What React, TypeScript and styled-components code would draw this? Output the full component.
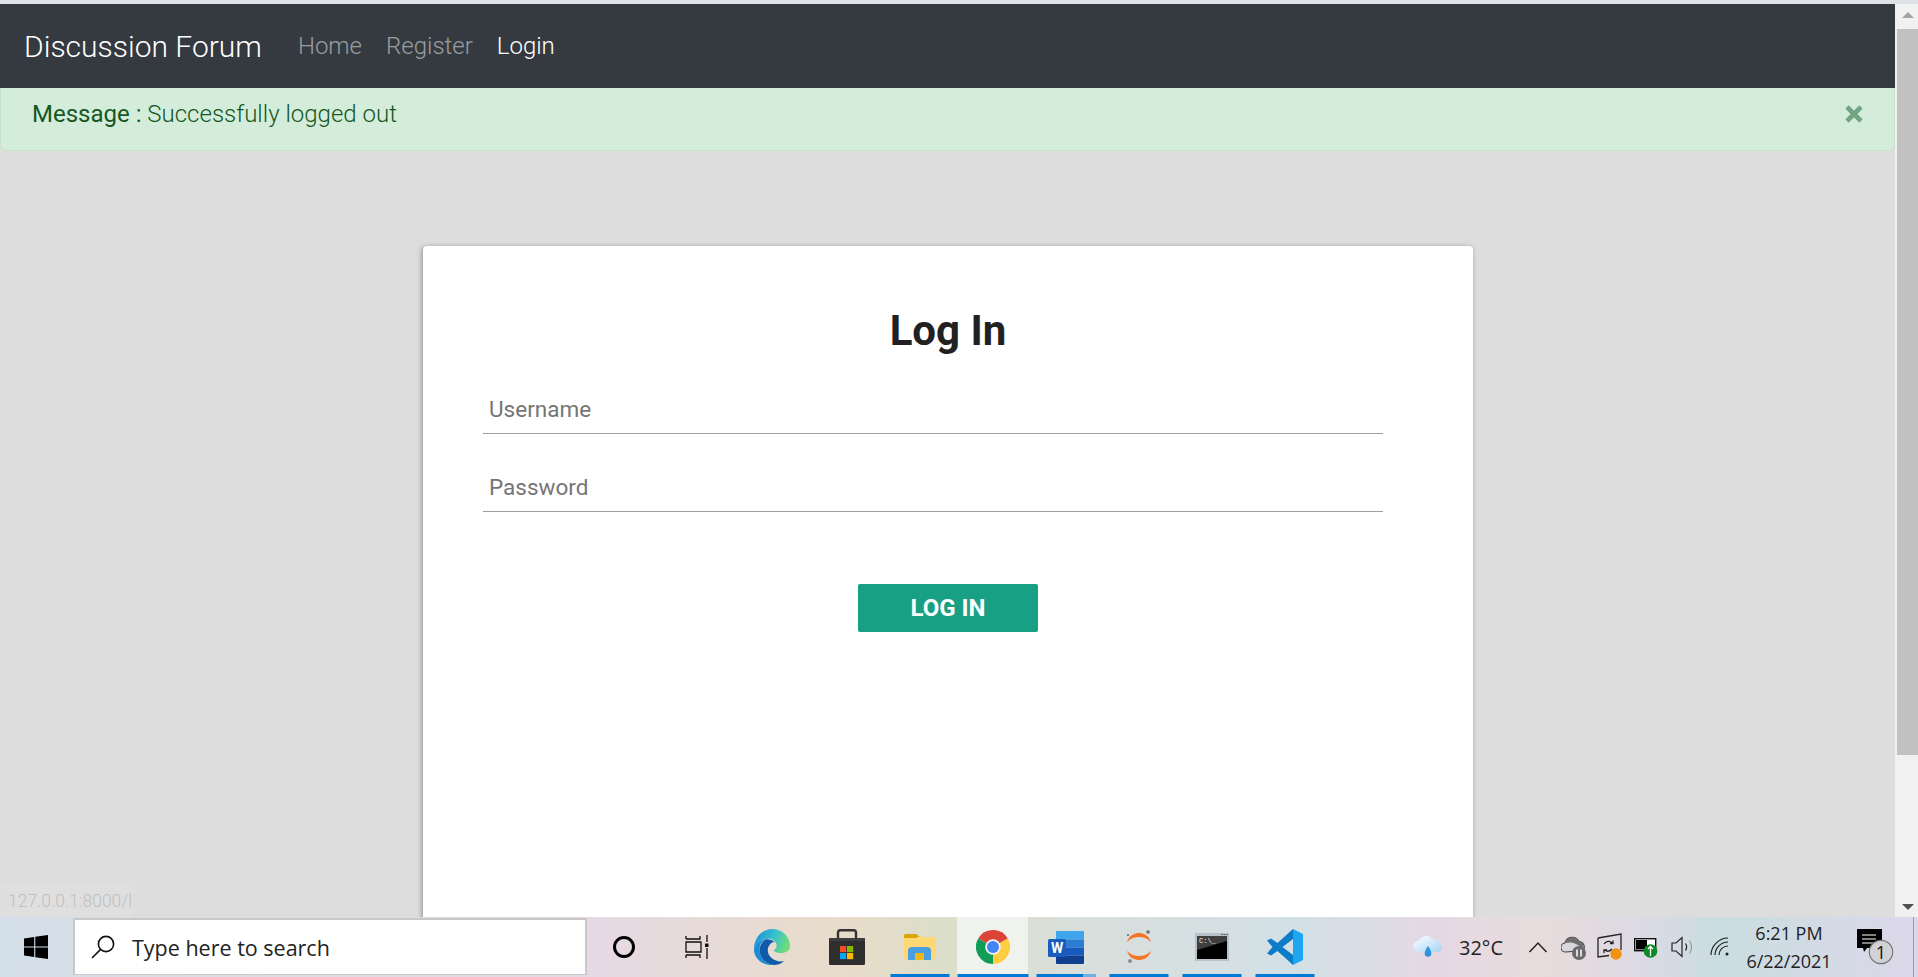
import React from "react";
import styled, { createGlobalStyle } from "styled-components";

const GlobalStyle = createGlobalStyle`
  * {
    box-sizing: border-box;
  }
  body {
    margin: 0;
    font-family: Roboto, "Liberation Sans", sans-serif;
    background: #dcdcdc;
  }
`;

const Screen = styled.div`
  display: flex;
  flex-direction: column;
  width: 1918px;
  height: 977px;
  overflow: hidden;
  position: relative;
`;

const TopStrip = styled.div`
  height: 4px;
  flex: none;
  background: #dee1e6;
`;

const Browser = styled.div`
  display: flex;
  flex: 1;
  min-height: 0;
`;

const Viewport = styled.div`
  flex: 1;
  min-width: 0;
  overflow: hidden;
  background: #dddddd;
`;

const Navbar = styled.nav`
  display: flex;
  align-items: center;
  height: 84px;
  padding: 0 24px;
  background: #343a40;
`;

const Brand = styled.a`
  font-size: 30px;
  font-weight: 300;
  color: #fff;
  margin-right: 36px;
`;

const NavLinks = styled.div`
  display: flex;
  gap: 24px;
`;

const NavLink = styled.a<{ $active?: boolean }>`
  font-size: 24px;
  font-weight: 300;
  color: ${(p) => (p.$active ? "#fff" : "rgba(255, 255, 255, 0.5)")};
`;

const Alert = styled.div`
  display: flex;
  align-items: center;
  justify-content: space-between;
  height: 63px;
  padding: 0 29px 11px 31px;
  background: #d4edda;
  border: 1px solid #c3e6cb;
  border-top: none;
  border-radius: 0 0 6px 6px;
  color: #155724;
  font-size: 24px;
  font-weight: 300;
`;

const AlertLabel = styled.span`
  font-weight: 400;
`;

const CloseIcon = styled.svg`
  width: 22px;
  height: 22px;
  display: block;
`;

const Card = styled.div`
  width: 1050px;
  height: 800px;
  margin: 95px 0 0 423px;
  padding: 60px 90px 0 60px;
  background: #fff;
  border-radius: 4px;
  box-shadow: -1px 1px 5px rgba(0, 0, 0, 0.35);
`;

const Title = styled.h1`
  margin: 0;
  padding-left: 30px;
  font-size: 42px;
  line-height: 50px;
  font-weight: 700;
  text-align: center;
  color: #212121;
`;

const Form = styled.form`
  display: flex;
  flex-direction: column;
`;

const Input = styled.input`
  display: block;
  width: 100%;
  height: 50px;
  margin-top: 28px;
  padding: 0 6px;
  border: none;
  border-bottom: 1px solid #9e9e9e;
  outline: none;
  font-family: inherit;
  font-size: 22.5px;
  font-weight: 400;
  &::placeholder {
    color: #757575;
    opacity: 1;
  }
`;

const Submit = styled.button`
  align-self: center;
  width: 180px;
  height: 48px;
  margin: 72px 0 0 30px;
  padding: 0 0 1px;
  border: none;
  border-radius: 2px;
  background: #17a084;
  color: #fff;
  font-family: inherit;
  font-size: 24px;
  font-weight: 700;
  text-transform: uppercase;
`;

const Scrollbar = styled.div`
  display: flex;
  flex-direction: column;
  align-items: flex-end;
  justify-content: space-between;
  flex: none;
  width: 23px;
  background: #f1f1f1;
  padding-top: 8px;
  padding-bottom: 7px;
`;

const ArrowBtn = styled.div<{ $down?: boolean }>`
  align-self: center;
  width: 0;
  height: 0;
  margin-left: 2px;
  border-left: 6px solid transparent;
  border-right: 6px solid transparent;
  ${(p) =>
    p.$down
      ? "border-top: 6px solid #505050;"
      : "border-bottom: 6px solid #a3a3a3;"}
`;

const Thumb = styled.div`
  width: 21px;
  height: 726px;
  margin-top: 11px;
  background: #c1c1c1;
`;

const ScrollSpacer = styled.div`
  flex: 1;
`;

const StatusTip = styled.div`
  position: absolute;
  left: 0;
  bottom: 60px;
  width: 132px;
  height: 33px;
  padding: 7px 0 0 8px;
  background: #dfdfdf;
  color: #c0c0c0;
  font-size: 17.5px;
  font-weight: 300;
  border-radius: 0 2px 0 0;
  white-space: nowrap;
`;

const Taskbar = styled.div`
  display: flex;
  align-items: stretch;
  flex: none;
  height: 60px;
  background: linear-gradient(
    90deg,
    #d3dfe9 0,
    #dcdde6 200px,
    #e6d9e3 600px,
    #e8dcc9 850px,
    #d9dfca 960px,
    #d9dfdc 1080px,
    #d2e0e6 1300px,
    #e6d8e3 1440px,
    #e8dcdc 1540px,
    #dcdae4 1640px,
    #c9dde0 1720px,
    #dcd8ea 1918px
  );
`;

const StartButton = styled.div`
  display: flex;
  align-items: center;
  justify-content: center;
  width: 73px;
  padding-right: 1px;
`;

const SearchBox = styled.div`
  display: flex;
  align-items: center;
  width: 514px;
  gap: 16px;
  padding-left: 15px;
  margin-top: 1px;
  margin-bottom: 2px;
  background: #fff;
  border: 2px solid #c8c8c8;
  border-bottom-width: 1px;
  font-family: "Open Sans", sans-serif;
  font-size: 21.5px;
  color: #222;
`;

const TaskButton = styled.div<{ $active?: boolean; $open?: boolean; $w?: number }>`
  position: relative;
  display: flex;
  align-items: center;
  justify-content: center;
  width: ${(p) => p.$w ?? 73}px;
  ${(p) => p.$active && "background: linear-gradient(#f0f2ee, #f0f2ee) no-repeat center / 71px 100%;"}
  ${(p) =>
    p.$open &&
    `&::after {
      content: "";
      position: absolute;
      bottom: 0;
      left: 50%;
      transform: translateX(-50%);
      width: ${p.$active ? 71 : 59}px;
      height: 3px;
      background: #0078d4;
    }`}
`;

const WordLight = styled.span`
  position: absolute;
  bottom: 0;
  left: 54px;
  width: 12px;
  height: 3px;
  background: #6fb0e6;
  z-index: 1;
`;

const Tray = styled.div`
  display: flex;
  align-items: center;
  margin-left: auto;
  padding-right: 4px;
`;

const TrayItem = styled.div<{ $w: number }>`
  display: flex;
  align-items: center;
  justify-content: center;
  width: ${(p) => p.$w}px;
  height: 100%;
`;

const TempText = styled.span`
  font-family: "Open Sans", sans-serif;
  font-size: 20px;
  color: #222;
`;

const Clock = styled.div`
  display: flex;
  flex-direction: column;
  align-items: center;
  gap: 7px;
  font-family: "Open Sans", sans-serif;
  font-size: 18px;
  line-height: 21px;
  color: #222;
`;

const DesktopEdge = styled.div`
  width: 1px;
  height: 100%;
  background: #9a9aa4;
`;

const WindowsIcon = () => (
  <svg width="24" height="24" viewBox="0 0 24 24">
    <path d="M0 3.400 10.200 2v9.400H0zM11.300 1.800 24 0v11.400H11.300zM0 12.600h10.200V22L0 20.600zM11.300 12.600H24V24l-12.700-1.800z" fill="#000" />
  </svg>
);

const SearchIcon = () => (
  <svg width="26" height="26" viewBox="0 0 26 26" fill="none" stroke="#111" strokeWidth="1.600">
    <circle cx="16" cy="10" r="7.600" />
    <path d="M10.600 15.400 2 24" />
  </svg>
);

const CortanaIcon = () => (
  <svg width="24" height="24" viewBox="0 0 24 24" fill="none" stroke="#000" strokeWidth="3">
    <circle cx="12" cy="12" r="9.500" />
  </svg>
);

const TaskViewIcon = () => (
  <svg width="26" height="24" viewBox="0 0 26 24" fill="none" stroke="#111" strokeWidth="1.300">
    <path d="M1 4h14V1M1 4V1M1 7h15v10H1zM1 20h14v3M1 20v3M22 0v7M22 13v11" />
    <rect x="20" y="8.500" width="3.500" height="3.500" fill="#111" stroke="none" />
  </svg>
);

const EdgeIcon = () => (
  <svg width="36" height="36" viewBox="0 0 36 36">
    <defs>
      <linearGradient id="edgeA" x1="0" y1="0.300" x2="1" y2="0.600">
        <stop offset="0" stopColor="#1f8fd6" />
        <stop offset="0.500" stopColor="#35c0cf" />
        <stop offset="1" stopColor="#74de74" />
      </linearGradient>
    </defs>
    <path d="M0 20C1 15 5 11.500 11 10.500 7 13 5 17 5.500 22 6 29 12 35.500 20 36 9 37 0 30 0 20z" fill="#1c8bd6" />
    <path d="M11 10.500c-3 2.500-6 6.500-5.500 11.500.5 7 6.500 13.500 14.500 14 3 0 7-1 10-4-4 1-9 0-12.500-3-4-3.500-5-9-2-13 1-2 3-3 5-3-2-2-6-3.500-9.500-2.500z" fill="#0e5ca8" />
    <path d="M18 0C29 0 36 8 36 17c0 5-4 7-9 7-4 0-7-1-7-3 2-1 3-3 2.500-5.500C21 10 15 8.500 10 10.500 5 12.500 1 16 0 20 0 9 8 0 18 0z" fill="url(#edgeA)" />
  </svg>
);

const StoreIcon = () => (
  <svg width="36" height="36" viewBox="0 0 36 36">
    <path d="M9 10V3.500A2.500 2.500 0 0 1 11.500 1.200h13A2.500 2.500 0 0 1 27 3.500V10" fill="none" stroke="#333" strokeWidth="2.400" />
    <path d="M0 9h36v25.500a1.500 1.500 0 0 1-1.500 1.500h-33A1.500 1.500 0 0 1 0 34.500z" fill="#2e2e2e" />
    <path d="M0 9h36v3H0z" fill="#3d3d3d" />
    <rect x="11" y="17" width="6.200" height="6.200" fill="#f25022" />
    <rect x="18" y="17" width="6.200" height="6.200" fill="#7fba00" />
    <rect x="11" y="24" width="6.200" height="6.200" fill="#00a4ef" />
    <rect x="18" y="24" width="6.200" height="6.200" fill="#ffb900" />
  </svg>
);

const ExplorerIcon = () => (
  <svg width="32" height="26" viewBox="0 0 32 26">
    <path d="M0 1.500A1.500 1.500 0 0 1 1.500 0h11l3 3-3 2H0z" fill="#dba400" />
    <path d="M0 4h12l2-1h16.500A1.500 1.500 0 0 1 32 4.500v19a1.500 1.500 0 0 1-1.500 1.500h-29A1.500 1.500 0 0 1 0 23.500z" fill="#fed872" />
    <path d="M4 25v-8a4 4 0 0 1 4-4h15a4 4 0 0 1 4 4v9h-7v-7h-9v7H4z" fill="#4a9fe0" />
    <rect x="11" y="19" width="9" height="7" fill="#f3b71a" />
  </svg>
);

const ChromeIcon = () => (
  <svg width="34" height="34" viewBox="0 0 48 48">
    <path d="M24 24 44.800 12A24 24 0 0 0 3.200 12z" fill="#db4437" />
    <path d="M24 24 3.200 12A24 24 0 0 0 24 48z" fill="#0f9d58" />
    <path d="M24 24 24 48A24 24 0 0 0 44.800 12z" fill="#ffcd40" />
    <circle cx="24" cy="24" r="11" fill="#f1f1f1" />
    <circle cx="24" cy="24" r="8.500" fill="#4285f4" />
  </svg>
);

const WordIcon = () => (
  <svg width="36" height="33" viewBox="0 0 36 33">
    <path d="M8 1a1 1 0 0 1 1-1h26a1 1 0 0 1 1 1v7.500H8z" fill="#41a5ee" />
    <rect x="8" y="8.500" width="28" height="8" fill="#2b7cd3" />
    <rect x="8" y="16.500" width="28" height="8" fill="#185abd" />
    <path d="M8 24.500h28V32a1 1 0 0 1-1 1H9a1 1 0 0 1-1-1z" fill="#103f91" />
    <rect x="0" y="8" width="18" height="18" rx="1.500" fill="#1a5cbd" />
    <text x="9" y="22" textAnchor="middle" fontFamily="Roboto, sans-serif" fontWeight="700" fontSize="14" fill="#fff">W</text>
  </svg>
);

const JupyterIcon = () => (
  <svg width="26" height="34" viewBox="0 0 26 34">
    <path d="M1 12C3 5 9 3 13 3s10 2 12 9C21 8 17 7 13 7S5 8 1 12z" fill="#f37726" />
    <path d="M1 21c2 7 8 9 12 9s10-2 12-9c-4 4-8 5-12 5S5 25 1 21z" fill="#f37726" />
    <circle cx="22" cy="2" r="1.800" fill="#6f6f70" />
    <circle cx="2" cy="5" r="1" fill="#616262" />
    <circle cx="4" cy="31" r="2" fill="#8d8d8d" />
  </svg>
);

const TerminalIcon = () => (
  <svg width="34" height="28" viewBox="0 0 34 28">
    <rect width="34" height="28" fill="#b9c0c9" />
    <path d="M26 1.500h1.500M28.500 1.500H30M31 1.500h1.500" stroke="#555" strokeWidth="1" />
    <rect x="2" y="3" width="30" height="23" fill="#000" />
    <path d="M2 3h30v5C22 11 12 14 2 17z" fill="#3f3f3f" />
    <text x="4" y="10" fontFamily="Liberation Mono, monospace" fontSize="7" fill="#eee">C:\_</text>
  </svg>
);

const VsCodeIcon = () => (
  <svg width="36" height="36" viewBox="0 0 36 36">
    <path d="M26 0 10.500 14 4 9.500 0 11.500 5.500 18 0 24.500 4 26.500 10.500 22 26 36V26L15.500 18 26 10z" fill="#0a7cc8" />
    <path d="M26 0 36 5v26l-10 5z" fill="#1fa6f0" />
  </svg>
);

const WeatherIcon = () => (
  <svg width="30" height="22" viewBox="0 0 30 22">
    <defs>
      <linearGradient id="cloudFill" x1="0" y1="0" x2="1" y2="1">
        <stop offset="0" stopColor="#ffffff" />
        <stop offset="1" stopColor="#a6d4f5" />
      </linearGradient>
    </defs>
    <path d="M6 16a5.500 5.500 0 0 1-.5-11C7 2 10 0 13.500 0 17 0 20 2 22 5a5.500 5.500 0 0 1 3 11z" fill="url(#cloudFill)" />
    <path d="M15 10c2 3 3.300 5 3.300 7.500a3.300 3.300 0 0 1-6.600 0c0-2.500 1.300-4.500 3.300-7.500z" fill="#2f94dc" />
  </svg>
);

const ChevronIcon = () => (
  <svg width="20" height="12" viewBox="0 0 20 12" fill="none" stroke="#222" strokeWidth="1.500">
    <path d="M1.500 11 10 2l8.500 9" />
  </svg>
);

const OneDriveIcon = () => (
  <svg width="26" height="28" viewBox="0 0 26 28">
    <path d="M5 19a4.500 4.500 0 0 1-1-9 7.500 7.500 0 0 1 14-1.500 5.500 5.500 0 0 1 4 9z" fill="#d8d8dc" stroke="#444" strokeWidth="1.100" />
    <path d="M4 10a7.500 7.500 0 0 1 14-1.500 5.500 5.500 0 0 1 4 8C15 9 9 9 4 10z" fill="#6e6e70" />
    <circle cx="18" cy="20" r="7" fill="#6a6a6a" />
    <path d="M16 16.500v7M20 16.500v7" stroke="#fff" strokeWidth="1.500" />
  </svg>
);

const SyncIcon = () => (
  <svg width="26" height="28" viewBox="0 0 26 28" fill="none" stroke="#222" strokeWidth="1.300">
    <path d="M1 5 24 1v16M1 5v19l11-1.500" />
    <path d="M7 11c2-3 6-3.500 8-1M16 7.500v3h-3M15 16c-2 2.500-5 3-7 1M7 20v-3h3" />
    <circle cx="19" cy="21" r="5.700" fill="#f39110" stroke="none" />
  </svg>
);

const BatteryIcon = () => (
  <svg width="24" height="26" viewBox="0 0 24 26">
    <rect x="0.700" y="4.700" width="21" height="12" fill="#fff" stroke="#111" strokeWidth="1.400" />
    <rect x="2" y="6" width="11" height="9.500" fill="#000" />
    <circle cx="16.500" cy="17" r="6.800" fill="#0a8a24" />
    <path d="M16.500 12v10M14 15l2.500-2.500L19 15" stroke="#fff" strokeWidth="1.300" fill="none" />
  </svg>
);

const SpeakerIcon = () => (
  <svg width="23" height="22" viewBox="0 0 23 22" fill="none" stroke="#222" strokeWidth="1.200">
    <path d="M1 7h4l6-5.500v19L5 15H1z" />
    <path d="M14.500 7.500c1.300 2 1.300 5 0 7" />
    <path d="M18.500 4.500c2.500 4 2.500 9 0 13" stroke="#999" />
  </svg>
);

const WifiIcon = () => (
  <svg width="20" height="20" viewBox="0 0 20 20" fill="none" stroke="#222" strokeWidth="1.200">
    <path d="M1 18C1 9 9 1 18 1M5 18C5 11 11 5 18 5M9 18c0-5 4-9 9-9" />
    <circle cx="17" cy="17" r="1.500" fill="#222" stroke="none" />
  </svg>
);

const NotificationIcon = () => (
  <svg width="38" height="36" viewBox="0 0 38 36">
    <path d="M0 0h25v19H10l-3 4-1-4H0z" fill="#000" />
    <path d="M5 6h14M5 10h14M5 14h14" stroke="#fff" strokeWidth="1.200" />
    <circle cx="24" cy="23" r="11.700" fill="#d2d2d6" stroke="#777" strokeWidth="1.200" />
    <text x="24" y="29.500" textAnchor="middle" fontFamily="Open Sans, sans-serif" fontSize="18" fill="#111">1</text>
  </svg>
);

const App = () => {
  return (
    <Screen>
      <GlobalStyle />
      <TopStrip />
      <Browser>
        <Viewport>
          <Navbar>
            <Brand>Discussion Forum</Brand>
            <NavLinks>
              <NavLink>Home</NavLink>
              <NavLink>Register</NavLink>
              <NavLink $active>Login</NavLink>
            </NavLinks>
          </Navbar>
          <Alert>
            <span>
              <AlertLabel>Message :</AlertLabel> Successfully logged out
            </span>
            <CloseIcon viewBox="0 0 22 22">
              <path d="M4 4l14 14M18 4 4 18" stroke="#72a583" strokeWidth="4.600" />
            </CloseIcon>
          </Alert>
          <Card>
            <Title>Log In</Title>
            <Form>
              <Input placeholder="Username" />
              <Input placeholder="Password" type="password" />
              <Submit type="button">Log In</Submit>
            </Form>
          </Card>
        </Viewport>
        <Scrollbar>
          <ArrowBtn />
          <Thumb />
          <ScrollSpacer />
          <ArrowBtn $down />
        </Scrollbar>
      </Browser>
      <StatusTip>127.0.0.1:8000/l</StatusTip>
      <Taskbar>
        <StartButton>
          <WindowsIcon />
        </StartButton>
        <SearchBox>
          <SearchIcon />
          Type here to search
        </SearchBox>
        <TaskButton $w={74}>
          <CortanaIcon />
        </TaskButton>
        <TaskButton>
          <TaskViewIcon />
        </TaskButton>
        <TaskButton $w={76}>
          <EdgeIcon />
        </TaskButton>
        <TaskButton>
          <StoreIcon />
        </TaskButton>
        <TaskButton $open>
          <ExplorerIcon />
        </TaskButton>
        <TaskButton $open $active>
          <ChromeIcon />
        </TaskButton>
        <TaskButton $open>
          <WordIcon />
          <WordLight />
        </TaskButton>
        <TaskButton $open>
          <JupyterIcon />
        </TaskButton>
        <TaskButton $open>
          <TerminalIcon />
        </TaskButton>
        <TaskButton $open>
          <VsCodeIcon />
        </TaskButton>
        <Tray>
          <TrayItem $w={30}>
            <WeatherIcon />
          </TrayItem>
          <TrayItem $w={76}>
            <TempText>32°C</TempText>
          </TrayItem>
          <TrayItem $w={38}>
            <ChevronIcon />
          </TrayItem>
          <TrayItem $w={34}>
            <OneDriveIcon />
          </TrayItem>
          <TrayItem $w={38}>
            <SyncIcon />
          </TrayItem>
          <TrayItem $w={34}>
            <BatteryIcon />
          </TrayItem>
          <TrayItem $w={38}>
            <SpeakerIcon />
          </TrayItem>
          <TrayItem $w={38}>
            <WifiIcon />
          </TrayItem>
          <TrayItem $w={100}>
            <Clock>
              <span>6:21 PM</span>
              <span>6/22/2021</span>
            </Clock>
          </TrayItem>
          <TrayItem $w={74}>
            <NotificationIcon />
          </TrayItem>
          <DesktopEdge />
        </Tray>
      </Taskbar>
    </Screen>
  );
};

export default App;
